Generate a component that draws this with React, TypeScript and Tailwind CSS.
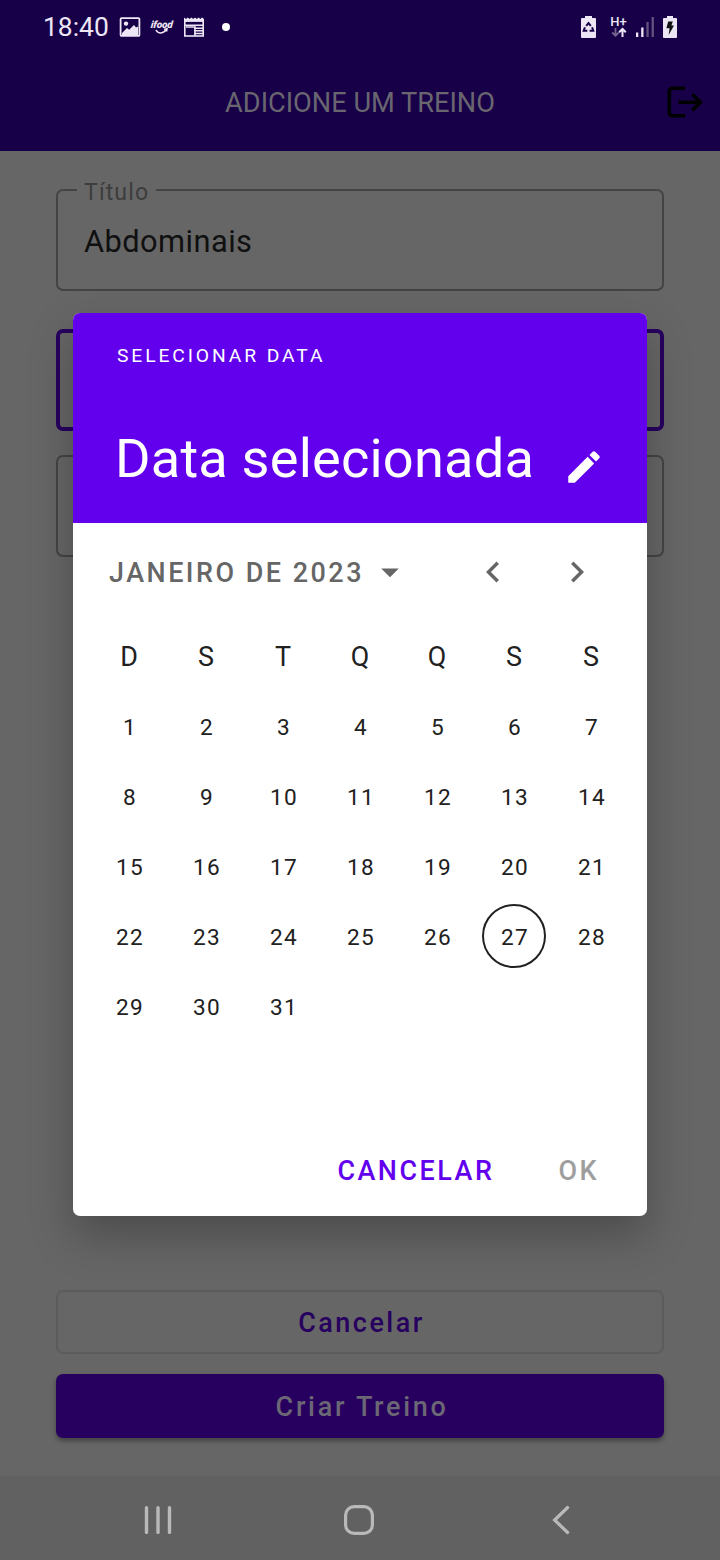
import React from "react";

const weekdays = ["D", "S", "T", "Q", "Q", "S", "S"];
const days = Array.from({ length: 31 }, (_, i) => i + 1);
const TODAY = 27;

function StatusBar() {
  return (
    <div className="flex h-[53px] items-center pl-[43px] text-[#ece6f5]">
      <span className="w-[76px] pt-[2px] text-[26.4px] leading-none">18:40</span>
      <svg width="22" height="22" viewBox="0 0 22 22">
        <rect x="1.6" y="2.1" width="18.8" height="17.8" rx="1" fill="none" stroke="currentColor" strokeWidth="1.8" />
        <circle cx="7" cy="7.6" r="2.2" fill="currentColor" />
        <path d="M3 17l5-5 2.2 1.8L15 9l2 2.5 2-1V19H3z" fill="currentColor" />
      </svg>
      <div className="ml-[9px] flex h-[20px] w-[24px] flex-col items-center">
        <span className="h-[11px] -skew-x-6 text-[10px] leading-[15px] font-black tracking-[-0.1px] italic">ifood</span>
        <svg width="14" height="7" viewBox="0 0 14 7">
          <path d="M1 2c2 4 8 4 10-.5M9 1.5l3-.8-.4 2.8" fill="none" stroke="currentColor" strokeWidth="1.6" />
        </svg>
      </div>
      <svg className="ml-[9px]" width="22" height="22" viewBox="0 0 22 22">
        <path d="M1 6V1.5L3 3l1.8-1.5L6.6 3l1.8-1.5L10.2 3 12 1.5 13.8 3l1.8-1.5L17.4 3 19 1.5 21 3v3z" fill="currentColor" />
        <rect x="1.8" y="3.8" width="18.4" height="16.2" fill="none" stroke="currentColor" strokeWidth="1.6" />
        <path d="M3 6.6h16" stroke="#180048" strokeWidth="1.4" />
        <path d="M2 9.2h18M11 12.2h9M11 14.8h9M11 17.4h9" stroke="currentColor" strokeWidth="1.5" />
        <path d="M3 11h9v9" fill="none" stroke="currentColor" strokeWidth="1.6" />
      </svg>
      <div className="ml-[17px] h-2 w-2 rounded-full bg-white" />
      <svg className="ml-[350px]" width="17" height="24" viewBox="0 0 17 24">
        <path d="M5 1h7v2h3q1 0 1 1v18q0 1-1 1H2q-1 0-1-1V4q0-1 1-1h3z" fill="currentColor" />
        <g fill="none" stroke="#180048" strokeWidth="2">
          <path d="M6.2 10.8L8.5 8l2.3 2.8" />
          <path d="M4.9 12.2l-1.2 3.6h3.6" />
          <path d="M12.1 12.2l1.2 3.6H9.6" />
        </g>
      </svg>
      <div className="ml-[13px] flex w-[17px] flex-col items-center">
        <span className="h-[12px] text-[13px] leading-[14px] font-medium whitespace-nowrap">H+</span>
        <svg width="16" height="11" viewBox="0 0 16 11">
          <path d="M4.5 1v8M1.2 5.5l3.3 3.3 3.3-3.3" fill="none" stroke="#74658f" strokeWidth="1.8" />
          <path d="M11.5 10V2M8.2 5.3L11.5 2l3.3 3.3" fill="none" stroke="currentColor" strokeWidth="2" />
        </svg>
      </div>
      <svg className="ml-[8px]" width="20" height="22" viewBox="0 0 20 22">
        <rect x="1" y="16.5" width="2.3" height="4.5" fill="currentColor" />
        <rect x="6.2" y="11.5" width="2.3" height="9.5" fill="currentColor" />
        <rect x="11.4" y="6" width="2.3" height="15" fill="#62527f" />
        <rect x="16.6" y="1" width="2.3" height="20" fill="#62527f" />
      </svg>
      <svg className="ml-[7px]" width="16" height="24" viewBox="0 0 16 24">
        <path d="M5 1h6v2h3q1 0 1 1v18q0 1-1 1H2q-1 0-1-1V4q0-1 1-1h3z" fill="currentColor" />
        <path d="M6.2 6.5h4.6L9.4 10.6H12L6.6 20l1-6.8H4.4z" fill="#111" />
      </svg>
    </div>
  );
}

function AppBar() {
  return (
    <div className="flex h-[98px] items-center">
      <div className="w-[54px]" />
      <h1 className="flex-1 pt-[3px] text-center text-[27.2px] leading-none text-[#696670]">
        ADICIONE UM TREINO
      </h1>
      <svg className="mr-[15px]" width="39" height="34" viewBox="0 0 39 34" fill="none" stroke="#000" strokeWidth="3.6">
        <path d="M19 3.2H6.3q-3 0-3 3v21.6q0 3 3 3H19" />
        <path d="M12.5 17.3H33M26.3 9.2l8.2 8.1-8.2 8.1" />
      </svg>
    </div>
  );
}

function Dialog() {
  return (
    <div className="flex h-[903px] w-[574px] flex-col overflow-hidden rounded-[7px] bg-white shadow-[0_20px_44px_rgba(0,0,0,0.26)]">
      <div className="flex h-[210px] flex-col bg-[#6200ee] pl-[43px] text-white">
        <div className="mt-[33px] h-[20px] pl-px text-[19.25px] leading-[20px] tracking-[2.9px]">SELECIONAR DATA</div>
        <div className="mt-[63px] -ml-px flex h-[60px] items-center">
          <span className="w-[448px] text-[54.2px] leading-[60px] tracking-[0.18px] whitespace-nowrap">Data selecionada</span>
          <svg className="mt-[16px]" width="42" height="42" viewBox="0 0 24 24" fill="currentColor">
            <path d="M3 17.25V21h3.75L17.81 9.94l-3.75-3.75L3 17.25zM20.71 7.04c.39-.39.39-1.02 0-1.41l-2.34-2.34c-.39-.39-1.02-.39-1.41 0l-1.83 1.83 3.75 3.75 1.83-1.83z" />
          </svg>
        </div>
      </div>
      <div className="flex h-[98px] items-center pl-[36px] text-[#666666]">
        <span className="w-[260px] pt-0.5 text-[26.95px] leading-none font-medium tracking-[2.5px] whitespace-nowrap">
          JANEIRO DE 2023
        </span>
        <svg width="42" height="42" viewBox="0 0 24 24" fill="currentColor">
          <path d="M7 10l5 5 5-5z" />
        </svg>
        <svg className="ml-[61px]" width="42" height="42" viewBox="0 0 24 24" fill="currentColor">
          <path d="M15.41 7.41L14 6l-6 6 6 6 1.41-1.41L10.83 12z" />
        </svg>
        <svg className="ml-[42px]" width="42" height="42" viewBox="0 0 24 24" fill="currentColor">
          <path d="M10 6L8.59 7.41 13.17 12l-4.58 4.59L10 18l6-6z" />
        </svg>
      </div>
      <div className="mx-auto grid w-[539px] grid-cols-7 text-[#212121]">
        {weekdays.map((d, i) => (
          <div key={i} className="flex h-[70px] items-center justify-center pt-0.5 text-[26.95px] leading-none">
            {d}
          </div>
        ))}
        {days.map((d) => (
          <div key={d} className="flex h-[70px] items-center justify-center">
            <div
              className={
                d === TODAY
                  ? "flex h-16 w-16 items-center justify-center rounded-full border-2 border-[#212121] pt-1 pl-[2px] text-[22.6px] leading-none tracking-[1.2px]"
                  : "flex h-16 w-16 items-center justify-center pt-1 pl-[2px] text-[22.6px] leading-none tracking-[1.2px]"
              }
            >
              {d}
            </div>
          </div>
        ))}
      </div>
      <div className="mt-auto flex h-[91px] items-center justify-end gap-[64px] pt-0.5 pr-[48px] text-[26.95px] leading-none font-medium tracking-[2.5px]">
        <span className="text-[#6200ee]">CANCELAR</span>
        <span className="text-[#9e9e9e]">OK</span>
      </div>
    </div>
  );
}

function NavBar() {
  return (
    <div className="flex h-[84px] items-center bg-[#616161] pt-1 pl-[142px]">
      <svg width="32" height="32" viewBox="0 0 32 32" fill="none" stroke="#b9b9b9" strokeWidth="3.4" strokeLinecap="round">
        <path d="M4.5 3.6v24.8M16 3.6v24.8M27.5 3.6v24.8" />
      </svg>
      <svg className="ml-[169px]" width="32" height="32" viewBox="0 0 32 32" fill="none" stroke="#b9b9b9" strokeWidth="3.2">
        <rect x="2.6" y="2.6" width="26.8" height="26.8" rx="8.5" />
      </svg>
      <svg className="ml-[174px]" width="24" height="32" viewBox="0 0 24 32" fill="none" stroke="#b9b9b9" strokeWidth="3.2" strokeLinecap="round">
        <path d="M18.6 3.5L5.6 16l13 12.5" />
      </svg>
    </div>
  );
}

export default function App() {
  return (
    <div className="relative flex h-[1560px] w-[720px] flex-col overflow-hidden bg-[#666666] font-['Roboto',sans-serif]">
      <header className="bg-[#180048]">
        <StatusBar />
        <AppBar />
      </header>
      <main className="flex flex-1 flex-col px-[56px] pt-[38px] pb-[38px]">
        <div className="relative flex h-[102px] items-center rounded-[7px] border-2 border-[#444444] pt-[5px] pl-[26px] text-[30.8px] leading-none tracking-[0.45px] text-[#101010]">
          <span className="absolute -top-[11px] left-[19px] bg-[#666666] pr-[7px] pl-[7px] text-[23.1px] leading-[26px] tracking-[1.1px] text-[#3d3d3d]">
            Título
          </span>
          Abdominais
        </div>
        <div className="mt-[38px] h-[102px] rounded-[7px] border-4 border-[#27005f]" />
        <div className="mt-[24px] h-[102px] rounded-[7px] border-2 border-[#444444]" />
        <button className="mt-auto flex h-16 items-center justify-center rounded-[7px] border-2 border-[#5c5c5c] pt-[3px] pl-[3px] text-[26.95px] leading-none font-medium tracking-[2.5px] text-[#27005f]">
          Cancelar
        </button>
        <button className="mt-5 flex h-16 items-center justify-center rounded-[7px] bg-[#27005f] pt-[3px] pl-[4px] text-[26.95px] leading-none font-medium tracking-[2.7px] text-[#6c6775] shadow-[0_3px_5px_rgba(0,0,0,0.35)]">
          Criar Treino
        </button>
      </main>
      <NavBar />
      <div className="absolute inset-x-0 top-[313px] flex justify-center">
        <Dialog />
      </div>
    </div>
  );
}
